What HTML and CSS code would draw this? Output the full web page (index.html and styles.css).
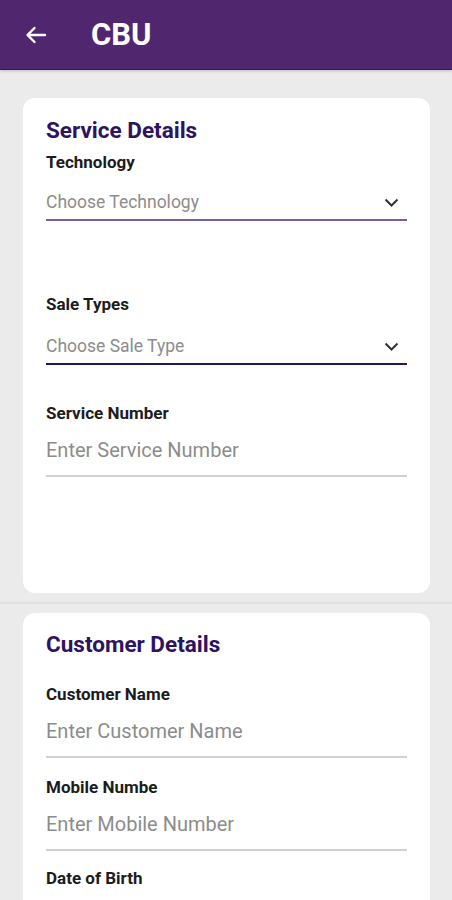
FILE: index.html
```html
<!DOCTYPE html>
<html lang="en">
<head>
    <meta charset="UTF-8">
    <meta name="viewport" content="width=device-width, initial-scale=1.0">
    <title>CBU</title>
    <link rel="stylesheet" href="styles.css">
</head>
<body>
    <div class="topbar">
        <button class="back">
            <svg width="24" height="24" viewBox="0 0 24 24"><path d="M21 12H4M10.5 5L3.5 12l7 7" fill="none" stroke="#fff" stroke-width="2.4" stroke-linecap="round" stroke-linejoin="round"/></svg>
        </button>
        <h1 class="title">CBU</h1>
    </div>
    <div class="content">
        <div class="card card-service">
            <h2 class="card-title">Service Details</h2>
            <div class="field f-tech">
                <div class="label">Technology</div>
                <div class="select line-purple">
                    <span class="placeholder small">Choose Technology</span>
                    <svg class="chevron" width="15" height="9" viewBox="0 0 15 9"><path d="M1.5 1.5l6 6 6-6" fill="none" stroke="#333" stroke-width="2"/></svg>
                </div>
            </div>
            <div class="field f-sale">
                <div class="label">Sale Types</div>
                <div class="select line-navy">
                    <span class="placeholder small">Choose Sale Type</span>
                    <svg class="chevron" width="15" height="9" viewBox="0 0 15 9"><path d="M1.5 1.5l6 6 6-6" fill="none" stroke="#333" stroke-width="2"/></svg>
                </div>
            </div>
            <div class="field f-number">
                <div class="label">Service Number</div>
                <div class="input"><span class="placeholder">Enter Service Number</span></div>
            </div>
        </div>
        <div class="divider"></div>
        <div class="card card-customer">
            <h2 class="card-title">Customer Details</h2>
            <div class="field f-name">
                <div class="label">Customer Name</div>
                <div class="input"><span class="placeholder">Enter Customer Name</span></div>
            </div>
            <div class="field f-mobile">
                <div class="label">Mobile Numbe</div>
                <div class="input"><span class="placeholder">Enter Mobile Number</span></div>
            </div>
            <div class="field f-birth">
                <div class="label">Date of Birth</div>
            </div>
        </div>
    </div>
</body>
</html>
```

FILE: styles.css
```css
body {
    margin: 0;
    background: #ebebeb;
    font-family: Roboto, "Noto Sans", sans-serif;
    height: 900px;
    overflow: hidden;
}
.topbar {
    height: 69px;
    background: #50266f;
    border-bottom: 1px solid #3a1656;
    display: flex;
    align-items: center;
    padding-left: 24px;
    box-shadow: 0 1px 3px rgba(0,0,0,0.2);
}
.back {
    background: none;
    border: none;
    padding: 0;
    width: 24px;
    height: 24px;
    display: flex;
    align-items: center;
    justify-content: center;
}
.title {
    margin: 0 0 0 43px;
    color: #fff;
    font-size: 31px;
    font-weight: 700;
}
.content {
    padding: 28px 22px 0 23px;
}
.card {
    background: #fff;
    border-radius: 12px;
    padding: 18px 23px 0 23px;
}
.card-service {
    height: 477px;
}
.divider {
    height: 2px;
    background: #e0e0e0;
    margin: 9px -23px 9px -23px;
}
.card-customer {
    padding-top: 17px;
    height: 400px;
}
.card-title {
    margin: 0;
    font-size: 22.5px;
    font-weight: 700;
    color: #2d1362;
    line-height: 28px;
}
.label {
    font-size: 17px;
    font-weight: 700;
    color: #1c1c1c;
    line-height: 22px;
}
.f-tech {
    margin-top: 7px;
}
.f-sale {
    margin-top: 72px;
}
.f-number {
    margin-top: 37px;
}
.f-name {
    margin-top: 25px;
}
.f-mobile {
    margin-top: 18px;
}
.f-birth {
    margin-top: 16px;
}
.select {
    display: flex;
    align-items: center;
    justify-content: space-between;
    height: 34px;
    padding: 12px 8px 0 0;
}
.f-sale .select {
    padding-top: 14px;
}
.line-purple {
    border-bottom: 2.5px solid #7e5d9c;
}
.line-navy {
    border-bottom: 2.5px solid #1d1a63;
}
.input {
    height: 36px;
    padding: 8px 0 7px 0;
    display: flex;
    align-items: center;
    border-bottom: 2px solid #d0d0d0;
}
.placeholder {
    color: #8c8c8c;
    font-size: 20px;
}
.placeholder.small {
    font-size: 17.5px;
}
```
